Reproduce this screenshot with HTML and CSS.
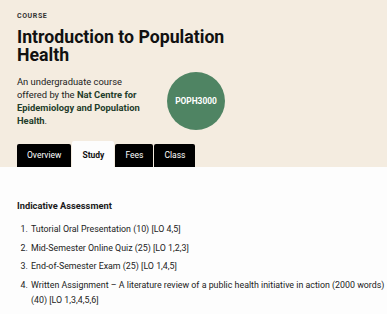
FILE: index.html
```html
<!DOCTYPE html>
<html lang="en">
<head>
    <meta charset="UTF-8">
    <meta name="viewport" content="width=device-width, initial-scale=1.0">
    <title>POPH3000 - Introduction to Population Health</title>
    <link rel="stylesheet" href="styles.css">
</head>
<body>

    <header class="hero">
        <p class="eyebrow">COURSE</p>
        <h1>Introduction to Population Health</h1>
        <div class="hero-row">
            <p class="intro">An undergraduate course offered by the <strong>Nat Centre for Epidemiology and Population Health</strong>.</p>
            <div class="code-badge">POPH3000</div>
        </div>
        <nav class="tabs">
            <a href="#overview" class="tab">Overview</a>
            <a href="#study" class="tab active">Study</a>
            <a href="#fees" class="tab">Fees</a>
            <a href="#class" class="tab">Class</a>
        </nav>
    </header>

    <section id="study" class="panel">
        <h2>Indicative Assessment</h2>
        <ol class="assessment">
            <li>Tutorial Oral Presentation (10) [LO 4,5]</li>
            <li>Mid-Semester Online Quiz (25) [LO 1,2,3]</li>
            <li>End-of-Semester Exam (25) [LO 1,4,5]</li>
            <li>Written Assignment – A literature review of a public health initiative in action (2000 words) (40) [LO 1,3,4,5,6]</li>
        </ol>
    </section>

</body>
</html>
```

FILE: styles.css
```css
/* Global Styles */
body {
    font-family: "Roboto", "Noto Sans", sans-serif;
    margin: 0;
    padding: 0;
    background-color: #fdfdfd;
    color: #1a1a1a;
}

.hero {
    background-color: #f4ece0;
    padding: 12px 17px 0;
}

.eyebrow {
    margin: 0;
    font-size: 7px;
    font-weight: 700;
    letter-spacing: 0.6px;
    color: #333;
}

h1 {
    margin: 8px 0 0;
    font-size: 17.7px;
    line-height: 18px;
    font-weight: 700;
    color: #111;
    width: 230px;
}

.hero-row {
    display: flex;
    align-items: center;
    margin-top: 8px;
}

.intro {
    margin: 0;
    width: 128px;
    font-size: 9.4px;
    line-height: 13px;
    color: #222;
}

.intro strong {
    color: #1f3d2b;
}

.code-badge {
    width: 58px;
    height: 58px;
    border-radius: 50%;
    background-color: #4f8463;
    color: #fff;
    font-size: 8.4px;
    font-weight: 700;
    display: flex;
    align-items: center;
    justify-content: center;
    margin-left: 22px;
}

.tabs {
    display: flex;
    align-items: flex-end;
    gap: 1px;
    margin-top: 11px;
}

.tab {
    display: block;
    background-color: #000;
    color: #fff;
    text-decoration: none;
    font-size: 8.5px;
    height: 23px;
    line-height: 23px;
    padding: 0 10px;
    border-radius: 2px 2px 0 0;
}

.tab.active {
    background-color: #fdfdfd;
    color: #111;
    font-weight: 700;
    height: 26px;
    line-height: 28px;
}

.panel {
    padding: 33px 0 10px 17px;
}

.panel h2 {
    margin: 0 0 11px;
    font-size: 9.3px;
    font-weight: 700;
}

.assessment {
    margin: 0;
    padding-left: 13px;
    font-size: 8.85px;
    line-height: 15px;
    color: #222;
}

.assessment li {
    margin-bottom: 3.7px;
    padding-left: 1px;
}
```
